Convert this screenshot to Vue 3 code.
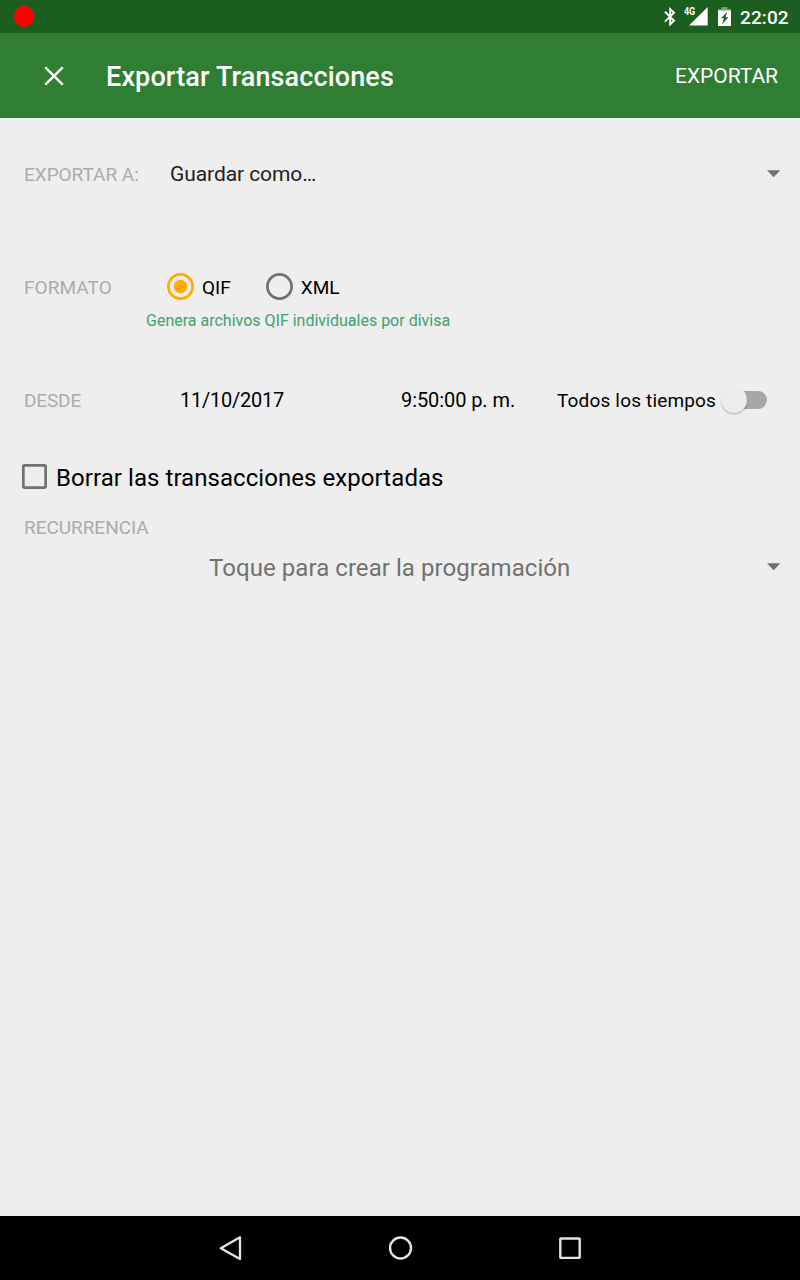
<script setup>
import { ref } from 'vue'

const format = ref('QIF')
const formats = ['QIF', 'XML']
</script>

<template>
  <div class="screen">
    <header class="status">
      <span class="record"></span>
      <div class="indicators">
        <svg class="bluetooth" width="14" height="20" viewBox="0 0 14 20">
          <path d="M2 4.8L11 13.7L7.2 17.3V2.1L11 5.7L2 14.6" fill="none" stroke="#fff" stroke-width="1.9" />
        </svg>
        <div class="signal">
          <svg width="19" height="19" viewBox="0 0 19 19"><path d="M18.7 0V18.6H0z" fill="#fff" /></svg>
          <span class="network">4G</span>
        </div>
        <svg class="battery" width="14" height="20" viewBox="0 0 14 20">
          <path d="M3.5 0h6v2h3.5V4.5H0V2h3.5z" fill="#79a17b" />
          <path d="M0 3.5h13V19H0z" fill="#fff" />
          <path d="M9.4 4.8L3 11.2h3L4.1 17.2l6.3-7H7.4z" fill="#1c5e20" />
        </svg>
        <span class="clock">22:02</span>
      </div>
    </header>

    <nav class="appbar">
      <svg class="close" width="20" height="20" viewBox="0 0 20 20">
        <path d="M1.3 1.3L18.7 18.7M18.7 1.3L1.3 18.7" stroke="#fff" stroke-width="2.5" />
      </svg>
      <h1>Exportar Transacciones</h1>
      <span class="action">EXPORTAR</span>
    </nav>

    <main>
      <section class="row destination">
        <span class="label">EXPORTAR A:</span>
        <span class="target">Guardar como…</span>
        <svg class="caret" width="14" height="8" viewBox="0 0 14 8"><path d="M0 0.3H13.3L6.65 7.2z" fill="#717171" /></svg>
      </section>

      <section class="row format">
        <span class="label">FORMATO</span>
        <div class="options">
          <label v-for="name in formats" :key="name" class="option" @click="format = name">
            <svg class="radio" :class="{ on: format === name }" width="27" height="27" viewBox="0 0 27 27">
              <circle class="ring" cx="13.5" cy="13.5" r="12.1" />
              <circle v-if="format === name" class="dot" cx="13.5" cy="13.5" r="6.8" />
            </svg>
            <span class="name">{{ name }}</span>
          </label>
        </div>
      </section>
      <p class="hint">Genera archivos QIF individuales por divisa</p>

      <section class="row since">
        <span class="label">DESDE</span>
        <span class="date">11/10/2017</span>
        <span class="time">9:50:00 p. m.</span>
        <span class="all">Todos los tiempos</span>
        <span class="switch"><span class="thumb"></span></span>
      </section>

      <section class="row remove">
        <svg class="box" width="25" height="25" viewBox="0 0 25 25">
          <rect x="1.35" y="1.35" width="22.3" height="22.3" rx="1.3" fill="none" stroke="#717171" stroke-width="2.7" />
        </svg>
        <span class="big">Borrar las transacciones exportadas</span>
      </section>

      <section class="row heading"><span class="label">RECURRENCIA</span></section>
      <section class="row recurrence">
        <span class="big muted">Toque para crear la programación</span>
        <svg class="caret" width="14" height="8" viewBox="0 0 14 8"><path d="M0 0.3H13.3L6.65 7.2z" fill="#717171" /></svg>
      </section>
    </main>

    <footer class="navbar">
      <svg width="24" height="26" viewBox="0 0 24 26"><path d="M21 2.2V24L1.8 13.2z" fill="none" stroke="#e4e4e4" stroke-width="2.3" stroke-linejoin="round" /></svg>
      <svg width="24" height="24" viewBox="0 0 24 24"><circle cx="11.5" cy="12" r="10.5" fill="none" stroke="#e4e4e4" stroke-width="2.4" /></svg>
      <svg width="22" height="22" viewBox="0 0 22 22"><rect x="1.3" y="1.5" width="19.4" height="19.4" rx="0.6" fill="none" stroke="#e4e4e4" stroke-width="2.4" /></svg>
    </footer>
  </div>
</template>

<style>
body { margin: 0; background: #eee; }
</style>

<style scoped>
.screen {
  width: 800px;
  height: 1280px;
  display: flex;
  flex-direction: column;
  overflow: hidden;
  background: #eee;
  color: #000;
  font-family: Roboto, "Noto Sans", sans-serif;
  white-space: nowrap;
}
svg { display: block; flex: none; }
.status {
  height: 33px;
  display: flex;
  align-items: center;
  justify-content: space-between;
  background: #1c5e20;
  color: #fff;
  padding: 0 11px 0 14px;
}
.record { width: 20px; height: 21px; border-radius: 50%; background: #f00; }
.indicators { display: flex; align-items: center; }
.bluetooth { margin-right: 12px; }
.signal { position: relative; margin-right: 10px; }
.network {
  position: absolute;
  left: -5px;
  top: -1px;
  font: 700 10.5px/12px Roboto, sans-serif;
  transform: scaleX(.85);
  transform-origin: left;
}
.battery { margin-right: 8px; }
.clock { font-size: 19px; letter-spacing: .1px; font-weight: 500; line-height: 22px; padding-top: 2px; width: 49px; }
.appbar {
  height: 85px;
  display: flex;
  align-items: center;
  background: #2f7e33;
  color: #fff;
  padding: 0 22px 0 44px;
}
h1 { margin: 0 auto 0 42px; font-size: 27px; letter-spacing: .13px; font-weight: 500; line-height: 32px; padding-top: 2px; }
.action { font-size: 21px; letter-spacing: -.05px; line-height: 26px; }
main { flex: 1; display: flex; flex-direction: column; }
.row { display: flex; align-items: center; padding-left: 24px; flex: none; }
.label { color: #ababab; font-size: 19px; letter-spacing: -.04px; line-height: 24px; padding-top: 1px; }
.caret { margin-left: auto; margin-right: 19px; }
.destination { height: 112px; }
.destination .label { width: 146px; }
.target { font-size: 21px; letter-spacing: -.08px; line-height: 26px; color: #212121; }
.format { height: 27px; margin-top: 43px; }
.format .label { width: 143px; padding-top: 3px; letter-spacing: .06px; }
.options { display: flex; gap: 35px; }
.option { display: flex; align-items: center; }
.ring { fill: none; stroke: #717171; stroke-width: 2.7; }
.on .ring { stroke: #ffab00; }
.dot { fill: #ffab00; }
.name { font-size: 19px; line-height: 24px; margin-left: 8px; padding-top: 3px; }
.hint { margin: 10px 0 0 146px; font-size: 16px; line-height: 22px; color: #3da26c; }
.since { height: 30px; margin-top: 53px; }
.since .label { width: 156px; letter-spacing: -.15px; }
.date { font-size: 20px; letter-spacing: -.24px; width: 221px; }
.time { font-size: 20px; letter-spacing: -.08px; width: 156px; }
.all { font-size: 19px; letter-spacing: .17px; line-height: 24px; padding-top: 1px; width: 163px; }
.switch { position: relative; width: 47px; height: 18px; border-radius: 9px; background: linear-gradient(90deg, transparent 13px, #a6a6a6 13px); }
.thumb {
  position: absolute;
  left: 1px;
  top: -4px;
  width: 26px;
  height: 26px;
  border-radius: 50%;
  background: #ececec;
  box-shadow: 0 1.5px 1.5px rgba(0, 0, 0, .22);
}
.remove { height: 39px; margin-top: 42px; padding-left: 22px; }
.box { margin-right: 9px; }
.big { font-size: 24px; letter-spacing: .06px; line-height: 30px; padding-top: 2px; }
.heading { height: 25px; margin-top: 19px; }
.recurrence { height: 40px; margin-top: 7px; }
.muted { margin-left: 185px; color: #717171; }
.navbar {
  height: 64px;
  background: #000;
  display: flex;
  align-items: center;
  justify-content: space-between;
  padding: 0 219px;
}
</style>
